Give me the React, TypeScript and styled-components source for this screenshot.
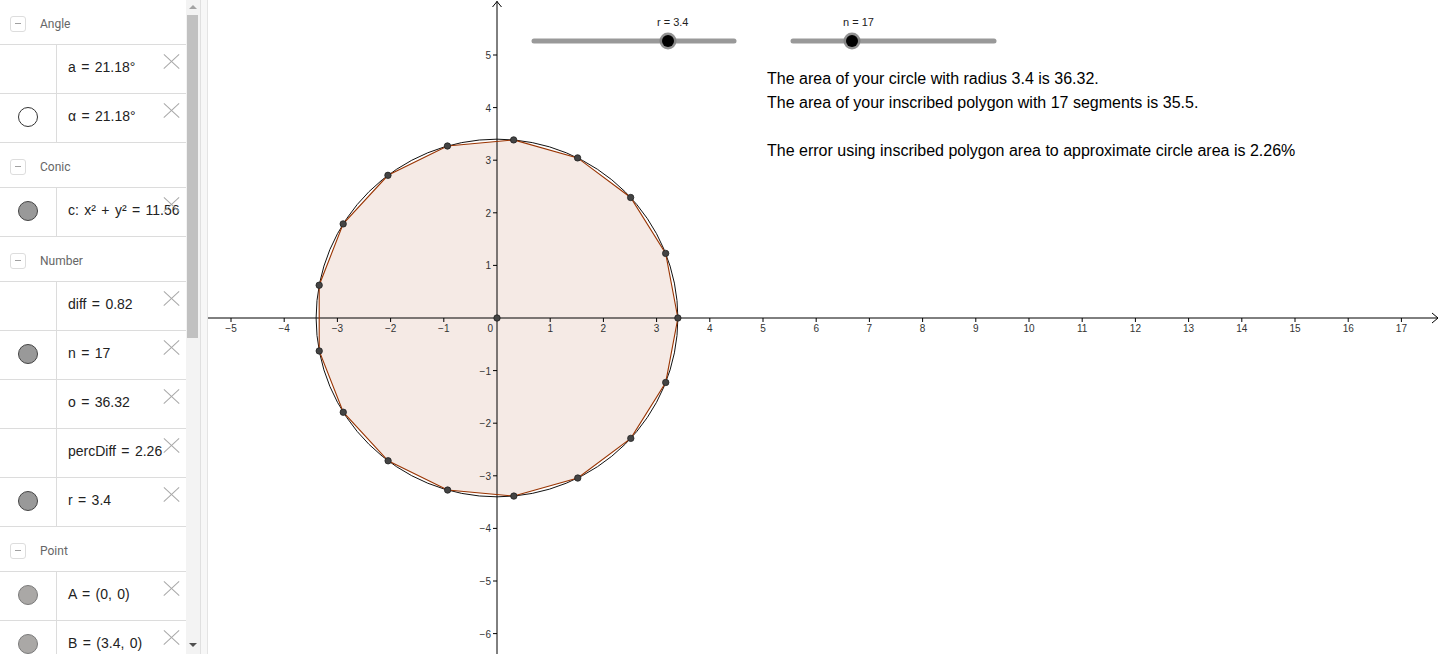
import React from "react";
import styled, { createGlobalStyle } from "styled-components";

const GlobalStyle = createGlobalStyle`
  html, body { margin: 0; padding: 0; background: #fff; overflow: hidden; }
  body { font-family: "Liberation Sans", Arial, sans-serif; }
  * { box-sizing: border-box; }
`;

const Page = styled.div`
  display: flex;
  width: 1440px;
  height: 654px;
  overflow: hidden;
  background: #fff;
`;

const AlgebraPanel = styled.aside`
  display: flex;
  width: 200px;
  height: 654px;
  flex-shrink: 0;
  background: #fff;
`;

const ItemList = styled.div`
  width: 186px;
  height: 654px;
  overflow: hidden;
  display: flex;
  flex-direction: column;
`;

const GroupHeader = styled.div`
  display: flex;
  align-items: center;
  flex-shrink: 0;
  height: 45px;
  padding-left: 10px;
  padding-top: 3px;
  gap: 14px;
  border-bottom: 1px solid #dcdcdc;
`;

const CollapseToggle = styled.span`
  position: relative;
  width: 16px;
  height: 16px;
  border: 1px solid #dddddd;
  border-radius: 3px;
  &::after {
    content: "";
    position: absolute;
    left: 4px;
    top: 6.5px;
    width: 6px;
    height: 1px;
    background: #a0a0a0;
  }
`;

const HeaderLabel = styled.span`
  font-family: Roboto, "Open Sans", sans-serif;
  font-size: 12px;
  color: #666;
`;

const ItemRow = styled.div`
  display: flex;
  flex-shrink: 0;
  height: 49px;
  border-bottom: 1px solid #dcdcdc;
`;

const MarkerCell = styled.div`
  width: 57px;
  flex-shrink: 0;
  display: flex;
  align-items: center;
  justify-content: center;
  padding-right: 1px;
  padding-bottom: 2px;
  border-right: 1px solid #dcdcdc;
`;

type MarkerKind = "hollow" | "filled" | "point";

const Marker = styled.span<{ $kind: MarkerKind }>`
  width: 20px;
  height: 20px;
  border-radius: 50%;
  border: 1px solid
    ${(p) => (p.$kind === "hollow" ? "#333" : p.$kind === "point" ? "#7a7a7a" : "#444")};
  background: ${(p) =>
    p.$kind === "hollow" ? "#fff" : p.$kind === "point" ? "#aaa8a6" : "#999"};
`;

const ValueCell = styled.div`
  position: relative;
  flex: 1;
  display: flex;
  align-items: center;
  padding-left: 11px;
  padding-bottom: 4px;
  overflow: hidden;
  white-space: pre;
  font-family: "Liberation Sans", Arial, sans-serif;
  font-size: 14px;
  word-spacing: 1.5px;
  color: #222;
`;

const DeleteButton = styled.span`
  position: absolute;
  top: 8px;
  right: 6px;
  width: 17px;
  height: 16px;
  &::before,
  &::after {
    content: "";
    position: absolute;
    left: -2px;
    top: 7.5px;
    width: 21px;
    height: 1.2px;
    background: #a8a8a8;
  }
  &::before { transform: rotate(43deg); }
  &::after { transform: rotate(-43deg); }
`;

const Scrollbar = styled.div`
  position: relative;
  width: 14px;
  height: 654px;
  flex-shrink: 0;
  background: #f3f3f3;
`;

const ScrollThumb = styled.div`
  position: absolute;
  left: 1px;
  top: 15px;
  width: 11px;
  height: 323px;
  background: #c1c1c1;
`;

const ScrollArrow = styled.span<{ $dir: "up" | "down" }>`
  position: absolute;
  left: 3px;
  ${(p) => (p.$dir === "up" ? "top: 5px;" : "bottom: 7px;")}
  width: 0;
  height: 0;
  border-left: 4px solid transparent;
  border-right: 4px solid transparent;
  ${(p) =>
    p.$dir === "up"
      ? "border-bottom: 4px solid #a3a3a3;"
      : "border-top: 4px solid #505050;"}
`;

const Splitter = styled.div`
  width: 8px;
  height: 654px;
  flex-shrink: 0;
  background: #f7f7f7;
  border-left: 1px solid #e0e0e0;
  border-right: 1px solid #e4e4e4;
`;

const Graphics = styled.main`
  position: relative;
  flex: 1;
  height: 654px;
  overflow: hidden;
`;

const Plot = styled.svg`
  display: block;
  font-family: "Liberation Sans", Arial, sans-serif;
`;

const InfoText = styled.div`
  position: absolute;
  left: 559px;
  top: 67px;
  font-family: "Liberation Sans", Arial, sans-serif;
  font-size: 16px;
  line-height: 24px;
  color: #000;
  white-space: pre;
`;

type Item = { marker?: MarkerKind; text: string };
type Group = { title: string; items: Item[] };

const groups: Group[] = [
  {
    title: "Angle",
    items: [{ text: "a = 21.18°" }, { marker: "hollow", text: "α = 21.18°" }],
  },
  { title: "Conic", items: [{ marker: "filled", text: "c: x² + y² = 11.56" }] },
  {
    title: "Number",
    items: [
      { text: "diff = 0.82" },
      { marker: "filled", text: "n = 17" },
      { text: "o = 36.32" },
      { text: "percDiff = 2.26" },
      { marker: "filled", text: "r = 3.4" },
    ],
  },
  {
    title: "Point",
    items: [
      { marker: "point", text: "A = (0, 0)" },
      { marker: "point", text: "B = (3.4, 0)" },
    ],
  },
];

const OX = 497;
const OY = 318;
const UX = 53.2;
const UY = 52.6;
const R = 3.4;
const N = 17;
const STEP = 21.18;

const px = (x: number) => OX + x * UX;
const py = (y: number) => OY - y * UY;

const vertices = Array.from({ length: N }, (_, k) => {
  const t = (k * STEP * Math.PI) / 180;
  return [px(R * Math.cos(t)), py(R * Math.sin(t))];
});

const fmt = (v: number) => (v < 0 ? "\u2212" + Math.abs(v) : String(v));

function Slider({
  x1,
  x2,
  y,
  knob,
  label,
  labelX,
}: {
  x1: number;
  x2: number;
  y: number;
  knob: number;
  label: string;
  labelX: number;
}) {
  return (
    <g>
      <text x={labelX} y={y - 15} fontSize={11} fill="#222">
        {label}
      </text>
      <line x1={x1} y1={y} x2={x2} y2={y} stroke="#999" strokeWidth={5} strokeLinecap="round" />
      <circle cx={knob} cy={y} r={8.5} fill="#7f7f7f" opacity={0.85} />
      <circle cx={knob} cy={y} r={6} fill="#000" />
    </g>
  );
}

function PlotArea() {
  const xs = Array.from({ length: 23 }, (_, i) => i - 5).filter((i) => i !== 0);
  const ys = Array.from({ length: 12 }, (_, i) => i - 6).filter((i) => i !== 0);
  return (
    <Plot width={1232} height={654} viewBox="208 0 1232 654">
      <polygon
        points={vertices.map((v) => v.join(",")).join(" ")}
        fill="rgba(153,51,0,0.1)"
        stroke="none"
      />
      <line x1={208} y1={OY} x2={1438} y2={OY} stroke="#000" strokeWidth={1} />
      <polyline points={`1432,${OY - 5} 1438,${OY} 1432,${OY + 5}`} fill="none" stroke="#000" strokeWidth={1} />
      <line x1={OX} y1={1} x2={OX} y2={654} stroke="#000" strokeWidth={1} />
      <polyline points={`${OX - 4.5},7 ${OX},1.5 ${OX + 4.5},7`} fill="none" stroke="#000" strokeWidth={1} />
      {xs.map((i) => (
        <g key={"x" + i}>
          <line x1={px(i)} y1={OY} x2={px(i)} y2={OY + 4} stroke="#000" strokeWidth={1} />
          <text x={px(i)} y={OY + 14} fontSize={10} textAnchor="middle" fill="#333">
            {fmt(i)}
          </text>
        </g>
      ))}
      {ys.map((j) => (
        <g key={"y" + j}>
          <line x1={OX - 4} y1={py(j)} x2={OX} y2={py(j)} stroke="#000" strokeWidth={1} />
          <text x={OX - 6} y={py(j) + 4} fontSize={10} textAnchor="end" fill="#333">
            {fmt(j)}
          </text>
        </g>
      ))}
      <text x={OX - 4} y={OY + 14} fontSize={10} textAnchor="end" fill="#333">
        0
      </text>
      <ellipse cx={OX} cy={OY} rx={R * UX} ry={R * UY} fill="none" stroke="#111" strokeWidth={1} />
      <polygon
        points={vertices.map((v) => v.join(",")).join(" ")}
        fill="none"
        stroke="#993300"
        strokeWidth={1.1}
      />
      {vertices.map((v, k) => (
        <circle key={"v" + k} cx={v[0]} cy={v[1]} r={3.2} fill="#444" stroke="#222" strokeWidth={0.8} />
      ))}
      <circle cx={OX} cy={OY} r={3.2} fill="#444" stroke="#222" strokeWidth={0.8} />
      <Slider x1={534} x2={734} y={41} knob={668} label="r = 3.4" labelX={657} />
      <Slider x1={793} x2={994} y={41} knob={852} label="n = 17" labelX={843} />
    </Plot>
  );
}

export default function App() {
  return (
    <>
      <GlobalStyle />
      <Page>
        <AlgebraPanel>
          <ItemList>
            {groups.map((g) => (
              <React.Fragment key={g.title}>
                <GroupHeader>
                  <CollapseToggle />
                  <HeaderLabel>{g.title}</HeaderLabel>
                </GroupHeader>
                {g.items.map((it) => (
                  <ItemRow key={it.text}>
                    <MarkerCell>{it.marker && <Marker $kind={it.marker} />}</MarkerCell>
                    <ValueCell>
                      {it.text}
                      <DeleteButton />
                    </ValueCell>
                  </ItemRow>
                ))}
              </React.Fragment>
            ))}
          </ItemList>
          <Scrollbar>
            <ScrollArrow $dir="up" />
            <ScrollThumb />
            <ScrollArrow $dir="down" />
          </Scrollbar>
        </AlgebraPanel>
        <Splitter />
        <Graphics>
          <PlotArea />
          <InfoText>
            {"The area of your circle with radius 3.4 is 36.32.\nThe area of your inscribed polygon with 17 segments is 35.5.\n\nThe error using inscribed polygon area to approximate circle area is 2.26%"}
          </InfoText>
        </Graphics>
      </Page>
    </>
  );
}
